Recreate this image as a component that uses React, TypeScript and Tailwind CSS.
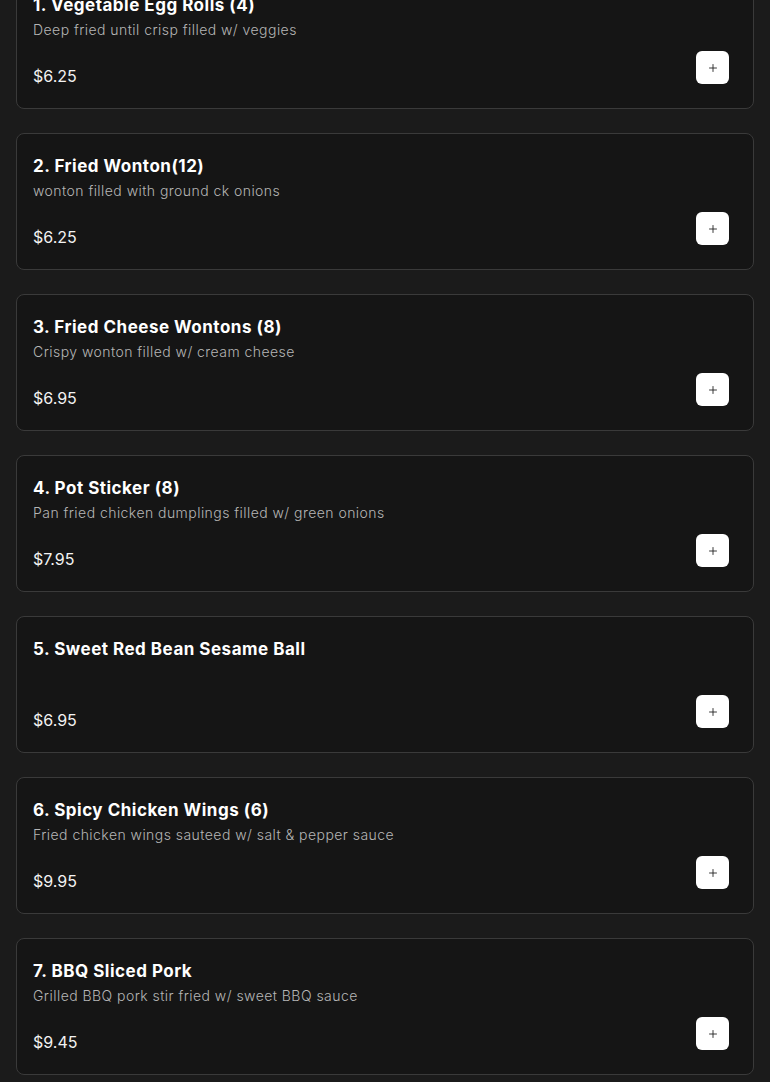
import React from "react";
import { Plus } from "lucide-react";

const items = [
  { name: "1. Vegetable Egg Rolls (4)", desc: "Deep fried until crisp filled w/ veggies", price: "$6.25" },
  { name: "2. Fried Wonton(12)", desc: "wonton filled with ground ck onions", price: "$6.25" },
  { name: "3. Fried Cheese Wontons (8)", desc: "Crispy wonton filled w/ cream cheese", price: "$6.95" },
  { name: "4. Pot Sticker (8)", desc: "Pan fried chicken dumplings filled w/ green onions", price: "$7.95" },
  { name: "5. Sweet Red Bean Sesame Ball", desc: "", price: "$6.95" },
  { name: "6. Spicy Chicken Wings (6)", desc: "Fried chicken wings sauteed w/ salt & pepper sauce", price: "$9.95" },
  { name: "7. BBQ Sliced Pork", desc: "Grilled BBQ pork stir fried w/ sweet BBQ sauce", price: "$9.45" },
];

export default function App() {
  return (
    <div className="min-h-screen bg-[#1b1b1b] px-4 overflow-hidden font-['Inter',sans-serif]">
      <div className="flex flex-col gap-6 mt-[-28px] pb-6">
        {items.map((it) => (
          <div
            key={it.name}
            className="flex flex-col border border-[#3a3a3a] rounded-lg bg-[#151515] pt-[18px] pl-4 pr-6 pb-6"
          >
            <div className="text-[17px] leading-[28px] font-bold text-white tracking-[0.5px]">{it.name}</div>
            <div className="h-[22px] text-[14px] leading-[22px] font-light text-[#b5b5b5] tracking-[0.45px]">{it.desc}</div>
            <div className="mt-[10px] h-[33px] flex items-start justify-between">
              <div className="mt-[13px] text-[16px] leading-6 text-[#f2f2f2]">{it.price}</div>
              <button className="w-[33px] h-[33px] rounded-md bg-white flex items-center justify-center">
                <Plus size={12} strokeWidth={1.75} color="#1f1f1f" />
              </button>
            </div>
          </div>
        ))}
      </div>
    </div>
  );
}
